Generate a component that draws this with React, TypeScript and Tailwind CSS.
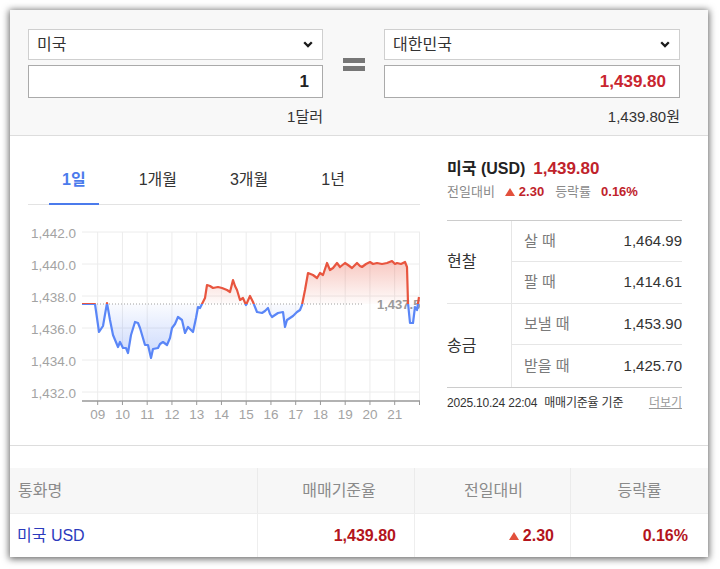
import React from "react";

const pts: [number, number][] = [
  [82, 304], [95, 304], [99, 332], [103, 326], [107, 303], [110, 320], [113, 335], [118, 347], [120, 342], [123, 348],
  [126, 348], [128, 353], [131, 335], [135, 322], [138, 323], [140, 328], [145, 345], [148, 345], [151, 358], [153, 349],
  [158, 348], [160, 344], [163, 342], [167, 345], [170, 338], [172, 328], [175, 324], [178, 317], [182, 320], [185, 333],
  [188, 327], [193, 332], [196, 318], [198, 307], [200, 308], [203, 302], [205, 298], [207, 285], [210, 286], [213, 288],
  [218, 287], [222, 288], [227, 290], [230, 292], [233, 280], [235, 286], [237, 290], [240, 300], [243, 298], [246, 305],
  [250, 296], [253, 302], [257, 312], [262, 313], [265, 311], [268, 308], [270, 314], [272, 317], [275, 315], [278, 313],
  [283, 312], [285, 327], [287, 320], [290, 318], [293, 316], [297, 312], [300, 310], [302, 305], [305, 290], [308, 273],
  [313, 275], [317, 278], [320, 273], [323, 275], [327, 263], [330, 270], [333, 268], [337, 263], [340, 267], [345, 263],
  [348, 265], [352, 268], [357, 263], [360, 266], [362, 267], [366, 264], [370, 262], [373, 264], [377, 263], [382, 264],
  [387, 263], [392, 261], [395, 264], [397, 263], [401, 264], [405, 262], [407, 267], [408, 303], [410, 323], [413, 323],
  [415, 307], [417, 310], [419, 297],
];

const linePath = "M" + pts.map((p) => p.join(",")).join(" L");
const areaPath = linePath + " L419,304 L82,304 Z";

const yTicks = [
  { y: 232, l: "1,442.0" },
  { y: 264, l: "1,440.0" },
  { y: 296, l: "1,438.0" },
  { y: 328, l: "1,436.0" },
  { y: 360, l: "1,434.0" },
  { y: 392, l: "1,432.0" },
];
const hours = ["09", "10", "11", "12", "13", "14", "15", "16", "17", "18", "19", "20", "21"];

function Chart() {
  return (
    <svg width={392} height={220} viewBox="28 205 392 220" className="block">
      <defs>
        <clipPath id="above">
          <rect x="0" y="200" width="500" height="104" />
        </clipPath>
        <clipPath id="below">
          <rect x="0" y="304" width="500" height="200" />
        </clipPath>
        <linearGradient id="redg" gradientUnits="userSpaceOnUse" x1="0" y1="261" x2="0" y2="304">
          <stop offset="0" stopColor="#e8553f" stopOpacity="0.32" />
          <stop offset="1" stopColor="#e8553f" stopOpacity="0.02" />
        </linearGradient>
        <linearGradient id="blueg" gradientUnits="userSpaceOnUse" x1="0" y1="304" x2="0" y2="358">
          <stop offset="0" stopColor="#5a86f7" stopOpacity="0.03" />
          <stop offset="1" stopColor="#5a86f7" stopOpacity="0.32" />
        </linearGradient>
      </defs>
      {yTicks.map((t) => (
        <g key={t.y}>
          <line x1={82} x2={420} y1={t.y} y2={t.y} stroke="#ececec" strokeWidth={1} />
          <text x={76} y={t.y + 2.5} textAnchor="end" dominantBaseline="middle" fontSize={13.5} fill="#a3a3a3">
            {t.l}
          </text>
        </g>
      ))}
      {hours.map((h, i) => {
        const x = 97.7 + 24.75 * i;
        return (
          <g key={h}>
            <line x1={x} x2={x} y1={232} y2={401} stroke="#ececec" strokeWidth={1} />
            <line x1={x} x2={x} y1={401} y2={405} stroke="#999" strokeWidth={1} />
            <text x={x} y={415} textAnchor="middle" dominantBaseline="middle" fontSize={13.5} fill="#a3a3a3">
              {h}
            </text>
          </g>
        );
      })}
      <line x1={419.5} x2={419.5} y1={232} y2={401} stroke="#ececec" strokeWidth={1} />
      <line x1={419.5} x2={419.5} y1={401} y2={405} stroke="#999" strokeWidth={1} />
      <line x1={82} x2={420} y1={401} y2={401} stroke="#999" strokeWidth={1.6} />
      <path d={areaPath} fill="url(#redg)" clipPath="url(#above)" />
      <path d={areaPath} fill="url(#blueg)" clipPath="url(#below)" />
      <line x1={82} x2={362} y1={304} y2={304} stroke="#a0a0a0" strokeWidth={1} strokeDasharray="1 2" />
      <text x={377} y={305.5} dominantBaseline="middle" fontSize={13} fontWeight={700} fill="#9a9a9a">
        1,437.5
      </text>
      <path d={linePath} fill="none" stroke="#e8553f" strokeWidth={2.2} strokeLinejoin="round" clipPath="url(#above)" />
      <path d={linePath} fill="none" stroke="#5a86f7" strokeWidth={2.2} strokeLinejoin="round" clipPath="url(#below)" />
    </svg>
  );
}

function Chevron() {
  return (
    <svg width="10" height="7" viewBox="0 0 10 7">
      <path d="M1.2 1.2 L5 5 L8.8 1.2" fill="none" stroke="#1a1a1a" strokeWidth="2.3" />
    </svg>
  );
}

function Up() {
  return (
    <svg width="10" height="8" viewBox="0 0 10 8" className="inline-block">
      <path d="M5 0 L10 8 L0 8 Z" fill="#e2503c" />
    </svg>
  );
}

function ConvCol({ w, label, value, red, sub }: { w: string; label: string; value: string; red?: boolean; sub: string }) {
  return (
    <div className={`${w} flex flex-col`}>
      <div className="h-[31px] border border-[#cfcfcf] bg-white flex items-center justify-between pl-[8px] pr-[9px] text-[16px] text-[#333]">
        <span>{label}</span>
        <Chevron />
      </div>
      <div
        className={`mt-[5px] h-[33px] border border-[#aaaaaa] bg-white flex items-center justify-end pr-[13px] text-[17px] font-bold ${
          red ? "text-[#c9252f]" : "text-[#222]"
        }`}
      >
        {value}
      </div>
      <div className="mt-[9px] text-right text-[15px] leading-[20px] text-[#333]">{sub}</div>
    </div>
  );
}

function Converter() {
  return (
    <div className="h-[126px] shrink-0 bg-[#f8f8f8] border-b border-[#dddddd] pt-[19px] pl-[18px] flex">
      <ConvCol w="w-[295px]" label="미국" value="1" sub="1달러" />
      <div className="w-[22px] ml-[20px] mr-[19px] mt-[29px] flex flex-col gap-[3px]">
        <div className="h-[5px] bg-[#777]" />
        <div className="h-[5px] bg-[#777]" />
      </div>
      <ConvCol w="w-[296px]" label="대한민국" value="1,439.80" red sub="1,439.80원" />
    </div>
  );
}

function Tabs() {
  const tabs = ["1일", "1개월", "3개월", "1년"];
  return (
    <div className="mt-[21px] flex border-b border-[#e3e3e3] pl-[21px] gap-[27px]">
      {tabs.map((t, i) => (
        <div
          key={t}
          className={`-mb-px h-[48px] px-[13px] flex items-center text-[16px] border-b-2 ${
            i === 0 ? "border-[#4b7bec] text-[#4b7bec] font-bold" : "border-transparent text-[#333]"
          }`}
        >
          {t}
        </div>
      ))}
    </div>
  );
}

function RateGroup({ label, rows, last }: { label: string; rows: [string, string][]; last?: boolean }) {
  return (
    <div className={`flex border-b ${last ? "border-[#cccccc]" : "border-[#e6e6e6]"}`}>
      <div className="w-[65px] border-r border-[#e6e6e6] flex items-center text-[16px] text-[#333]">{label}</div>
      <div className="flex-1 flex flex-col">
        {rows.map(([k, v], i) => (
          <div
            key={k}
            className={`h-[41px] flex items-center justify-between pl-[12px] ${i === 0 ? "border-b border-[#e6e6e6]" : ""} ${
              last && i === 1 ? "h-[42px]" : ""
            }`}
          >
            <span className="text-[15px] text-[#7a7a7a]">{k}</span>
            <span className="text-[15px] text-[#333]">{v}</span>
          </div>
        ))}
      </div>
    </div>
  );
}

function InfoPanel() {
  return (
    <div className="ml-[27px] w-[235px] pt-[22px] flex flex-col">
      <div className="h-[22px] flex items-center">
        <span className="text-[16px] font-bold text-[#222]">미국 (USD)</span>
        <span className="ml-[8px] text-[17px] font-bold text-[#c0232b]">1,439.80</span>
      </div>
      <div className="h-[24px] flex items-center text-[13px]">
        <span className="text-[#8a8a8a]">전일대비</span>
        <span className="ml-[10px] flex items-center gap-[4px] font-bold text-[#c0232b]">
          <Up />
          2.30
        </span>
        <span className="ml-[11px] text-[#8a8a8a]">등락률</span>
        <span className="ml-[10px] font-bold text-[#c0232b]">0.16%</span>
      </div>
      <div className="mt-[16px] border-t border-[#cccccc]">
        <RateGroup
          label="현찰"
          rows={[
            ["살 때", "1,464.99"],
            ["팔 때", "1,414.61"],
          ]}
        />
        <RateGroup
          label="송금"
          rows={[
            ["보낼 때", "1,453.90"],
            ["받을 때", "1,425.70"],
          ]}
          last
        />
      </div>
      <div className="mt-[7px] h-[16px] flex items-center justify-between text-[12px]">
        <span className="text-[#333] tracking-[-0.2px]">
          2025.10.24 22:04<span className="ml-[7px]">매매기준율 기준</span>
        </span>
        <span className="text-[#999] underline">더보기</span>
      </div>
    </div>
  );
}

function ChartSection() {
  return (
    <div className="h-[310px] shrink-0 border-b border-[#dddddd] flex pl-[18px]">
      <div className="w-[392px] flex flex-col">
        <Tabs />
        <Chart />
      </div>
      <InfoPanel />
    </div>
  );
}

function RateTable() {
  return (
    <div className="flex flex-col">
      <div className="h-[45px] bg-[#f7f7f7] flex text-[16px] text-[#8a8a8a]">
        <div className="w-[247px] pl-[8px] flex items-center">통화명</div>
        <div className="w-[157px] border-l border-[#ebebeb] flex items-center justify-center pl-[6px]">매매기준율</div>
        <div className="w-[156px] border-l border-[#ebebeb] flex items-center justify-center pl-[2px]">전일대비</div>
        <div className="flex-1 border-l border-[#ebebeb] flex items-center justify-center">등락률</div>
      </div>
      <div className="h-[44px] flex border-t border-[#eeeeee] text-[16px]">
        <div className="w-[247px] pl-[7px] flex items-center text-[#2b3bbd]">미국 USD</div>
        <div className="w-[157px] border-l border-[#eeeeee] flex items-center justify-end pr-[18px] font-bold text-[#b3141c]">
          1,439.80
        </div>
        <div className="w-[156px] border-l border-[#eeeeee] flex items-center justify-end pr-[16px] gap-[4px] font-bold text-[#b3141c]">
          <Up />
          2.30
        </div>
        <div className="flex-1 border-l border-[#eeeeee] flex items-center justify-end pr-[20px] font-bold text-[#b3141c]">
          0.16%
        </div>
      </div>
    </div>
  );
}

export default function App() {
  return (
    <div className="w-[720px] h-[569px] bg-white pt-[10px] pl-[10px] font-['Liberation_Sans','Noto_Sans_CJK_KR',sans-serif]">
      <div className="w-[698px] h-[547px] bg-white shadow-[0_1px_7px_1px_rgba(0,0,0,0.6)] flex flex-col overflow-hidden">
        <Converter />
        <ChartSection />
        <div className="h-[22px] shrink-0" />
        <RateTable />
      </div>
    </div>
  );
}
